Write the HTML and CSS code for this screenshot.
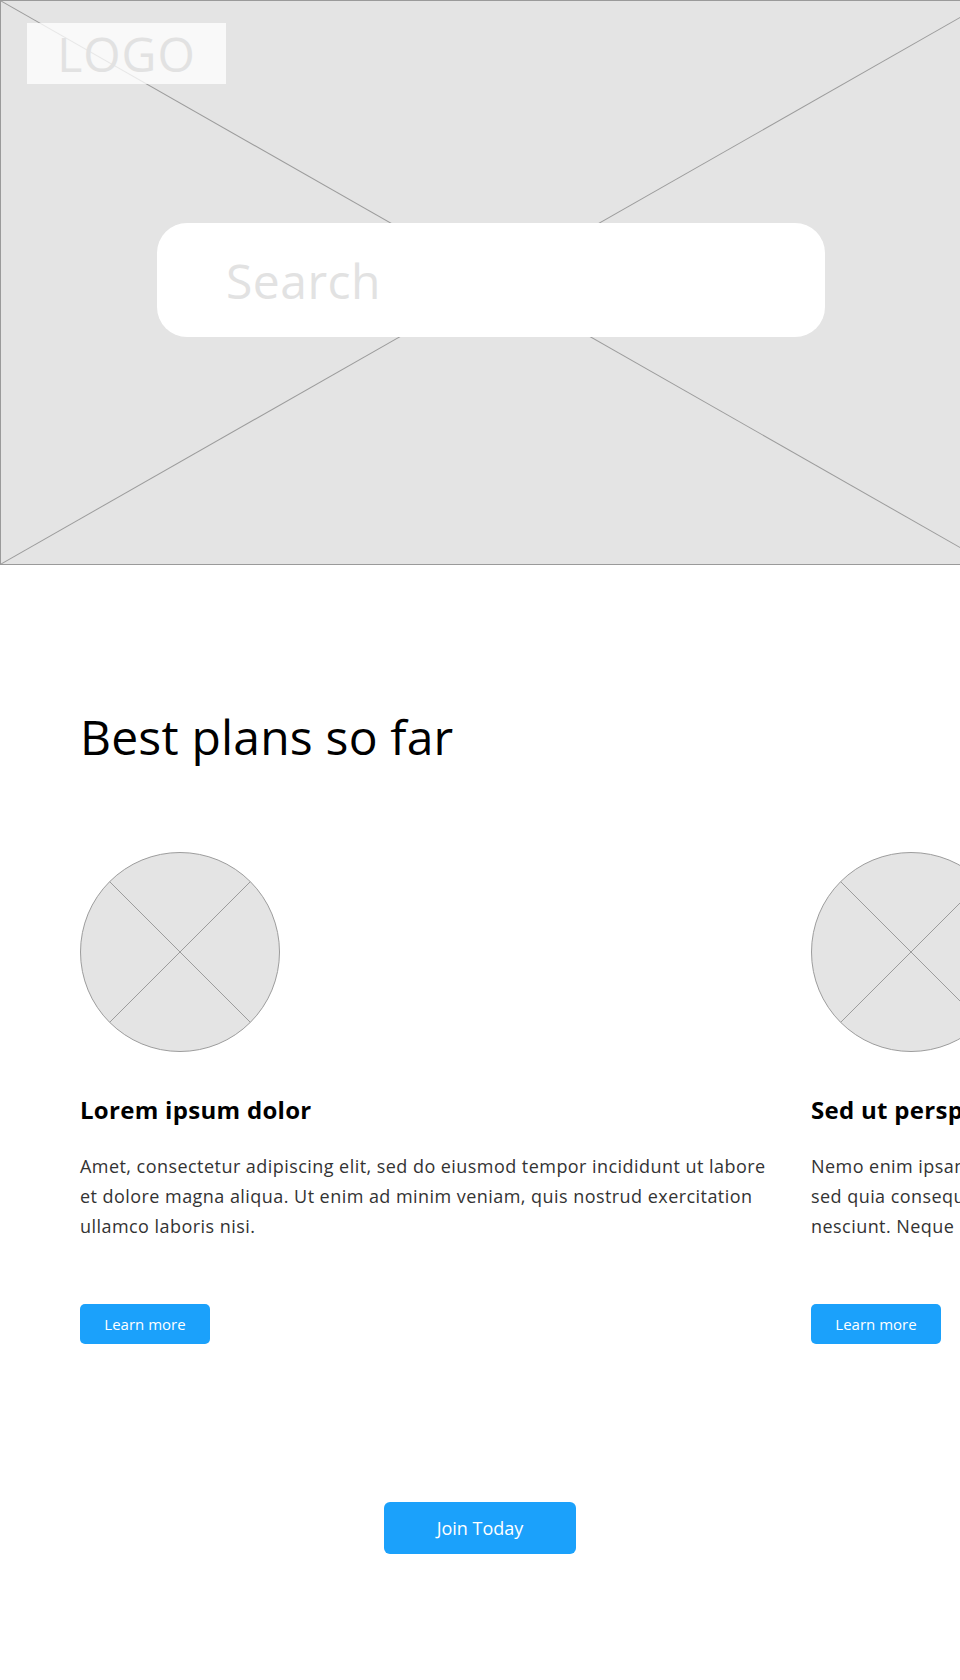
FILE: index.html
```html
<!DOCTYPE html>
<html lang="en">
<head>
<meta charset="utf-8">
<title>Best plans so far</title>
<link rel="stylesheet" href="styles.css">
</head>
<body>
<header class="hero">
  <svg class="hero-x" viewBox="0 0 990 565" preserveAspectRatio="none" aria-hidden="true">
    <line x1="0" y1="0" x2="990" y2="565"/>
    <line x1="990" y1="0" x2="0" y2="565"/>
  </svg>
  <div class="logo">LOGO</div>
  <input class="search" type="text" placeholder="Search">
</header>

<main class="plans">
  <h1 class="plans-title">Best plans so far</h1>
  <div class="cards">
    <article class="card">
      <svg class="card-img" viewBox="0 0 200 200" aria-hidden="true">
        <circle cx="100" cy="100" r="99.5"/>
        <line x1="29.6" y1="29.6" x2="170.4" y2="170.4"/>
        <line x1="170.4" y1="29.6" x2="29.6" y2="170.4"/>
      </svg>
      <h2 class="card-title">Lorem ipsum dolor</h2>
      <p class="card-text">Amet, consectetur adipiscing elit, sed do eiusmod tempor incididunt ut labore et dolore magna aliqua. Ut enim ad minim veniam, quis nostrud exercitation ullamco laboris nisi.</p>
      <a class="btn-learn" href="#">Learn more</a>
    </article>
    <article class="card">
      <svg class="card-img" viewBox="0 0 200 200" aria-hidden="true">
        <circle cx="100" cy="100" r="99.5"/>
        <line x1="29.6" y1="29.6" x2="170.4" y2="170.4"/>
        <line x1="170.4" y1="29.6" x2="29.6" y2="170.4"/>
      </svg>
      <h2 class="card-title">Sed ut perspiciatis</h2>
      <p class="card-text">Nemo enim ipsam voluptatem quia voluptas sit aspernatur aut odit aut fugit, sed quia consequuntur magni dolores eos qui ratione voluptatem sequi nesciunt. Neque porro quisquam est, qui dolorem ipsum.</p>
      <a class="btn-learn" href="#">Learn more</a>
    </article>
  </div>
</main>

<section class="cta">
  <a class="btn-join" href="#">Join Today</a>
</section>
</body>
</html>
```

FILE: styles.css
```css
* {
  box-sizing: border-box;
}

body {
  margin: 0;
  background: #ffffff;
  font-family: "Open Sans", "Noto Sans", sans-serif;
  color: #000000;
  overflow-x: hidden;
}

/* Hero */
.hero {
  position: relative;
  width: 990px;
  height: 565px;
  border: 1px solid #9a9a9a;
  background: #e4e4e4;
  display: flex;
  flex-direction: column;
  align-items: flex-start;
  padding: 22px 0 0 26px;
}

.hero-x {
  position: absolute;
  left: 0;
  top: 0;
  width: 100%;
  height: 100%;
}

.hero-x line {
  stroke: #9c9c9c;
  stroke-width: 1;
  vector-effect: non-scaling-stroke;
}

.logo {
  position: relative;
  width: 199px;
  height: 61px;
  background: rgba(255, 255, 255, 0.76);
  color: #e2e2e2;
  font-size: 48px;
  line-height: 61px;
  font-weight: 400;
  letter-spacing: 1px;
  text-align: center;
}

.search {
  position: relative;
  margin: 139px 0 0 130px;
  width: 668px;
  height: 114px;
  border: none;
  border-radius: 30px;
  background: #ffffff;
  padding: 0 0 0 69px;
  font-family: "Open Sans", "Noto Sans", sans-serif;
  font-size: 48px;
  letter-spacing: 0.5px;
  color: #333333;
  outline: none;
}

.search::placeholder {
  color: #e2e2e2;
  opacity: 1;
}

/* Plans */
.plans {
  padding: 143px 0 0 80px;
}

.plans-title {
  margin: 0;
  font-size: 48px;
  line-height: 58px;
  font-weight: 500;
  letter-spacing: 0.2px;
  color: #000000;
}

.cards {
  display: flex;
  gap: 31px;
  margin-top: 86px;
}

.card {
  flex: 0 0 700px;
  display: flex;
  flex-direction: column;
  align-items: flex-start;
}

.card-img {
  display: block;
  width: 200px;
  height: 200px;
}

.card-img circle {
  fill: #e4e4e4;
  stroke: #9c9c9c;
  stroke-width: 1;
}

.card-img line {
  stroke: #9c9c9c;
  stroke-width: 1;
}

.card-title {
  margin: 42px 0 0;
  font-size: 24px;
  line-height: 32px;
  font-weight: 700;
  letter-spacing: 0.3px;
  color: #000000;
}

.card-text {
  margin: 25px 0 0;
  font-size: 18px;
  line-height: 30px;
  letter-spacing: 0.45px;
  color: #333333;
  font-weight: 400;
}

.btn-learn {
  margin-top: 63px;
  display: inline-flex;
  align-items: center;
  justify-content: center;
  width: 130px;
  height: 40px;
  border-radius: 5px;
  background: #1ba1fb;
  color: #ffffff;
  font-size: 15px;
  text-decoration: none;
}

/* CTA */
.cta {
  display: flex;
  justify-content: center;
  padding-top: 158px;
}

.btn-join {
  display: inline-flex;
  align-items: center;
  justify-content: center;
  width: 192px;
  height: 52px;
  border-radius: 6px;
  background: #1ba1fb;
  color: #ffffff;
  font-size: 18px;
  text-decoration: none;
}
```
